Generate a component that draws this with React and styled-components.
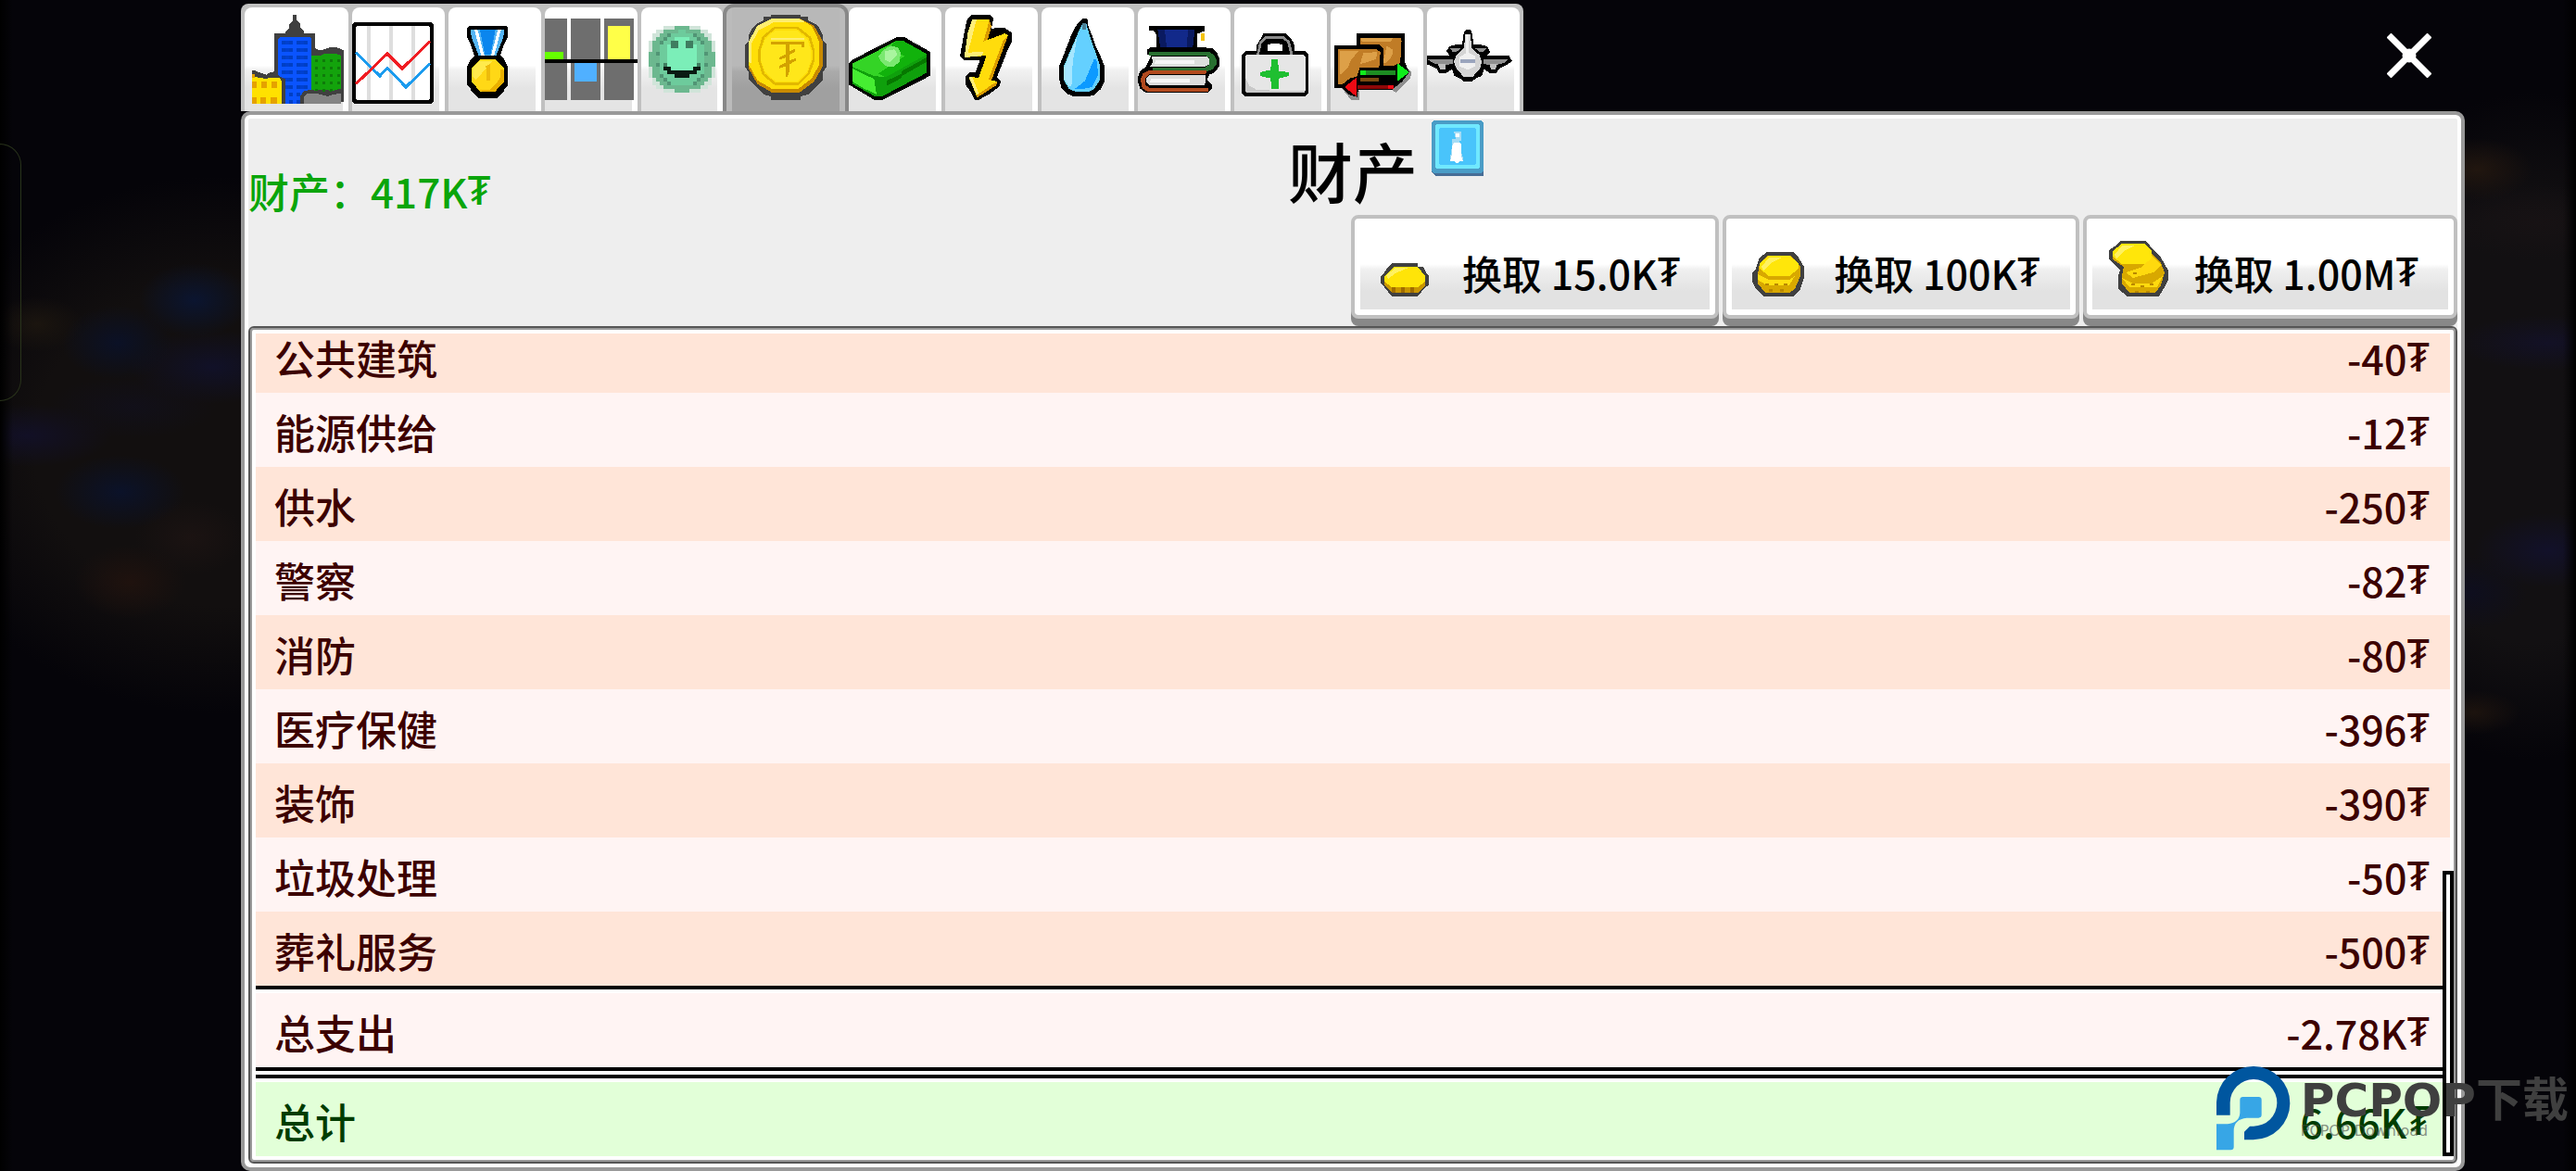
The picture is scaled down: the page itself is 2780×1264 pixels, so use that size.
import React from 'react';
import styled, { createGlobalStyle, css } from 'styled-components';

const GlobalStyle = createGlobalStyle`
  * {
    box-sizing: border-box;
  }

  body {
    margin: 0;
    background: #050409;
    font-family: 'Noto Sans CJK SC', 'Noto Sans', sans-serif;
    font-weight: 500;
  }
`;

const Screen = styled.div`
  position: relative;
  display: flex;
  flex-direction: column;
  height: 100vh;
  min-height: 700px;
  padding: 4px 120px 0 260px;
  overflow: hidden;
  background:
    linear-gradient(90deg, #000, transparent 14px, transparent calc(100% - 14px), #000),
    radial-gradient(ellipse 60px 40px at 127px 370px, #0b1126, transparent),
    radial-gradient(ellipse 60px 40px at 210px 324px, #0b1530, transparent),
    radial-gradient(ellipse 70px 40px at 130px 531px, #0b1229, transparent),
    radial-gradient(ellipse 90px 34px at 143px 439px, #11102288, transparent),
    radial-gradient(ellipse 90px 40px at 230px 396px, #111128, transparent),
    radial-gradient(ellipse 90px 34px at 30px 470px, #121026, transparent),
    radial-gradient(ellipse 60px 40px at 140px 628px, #1f120e, transparent),
    radial-gradient(ellipse 60px 40px at 205px 580px, #1b1312, transparent),
    radial-gradient(ellipse 50px 30px at 40px 350px, #1b150f, transparent),
    radial-gradient(ellipse 60px 34px at calc(100% - 107px) 183px, #21160f, transparent),
    radial-gradient(ellipse 110px 40px at calc(100% - 40px) 240px, #171214, transparent),
    radial-gradient(ellipse 100px 30px at calc(100% - 30px) 370px, #131126, transparent),
    radial-gradient(ellipse 80px 40px at calc(100% - 30px) 594px, #12112a, transparent),
    radial-gradient(ellipse 60px 40px at calc(100% - 113px) 640px, #0e0e1e, transparent),
    radial-gradient(ellipse 50px 24px at calc(100% - 110px) 769px, #1c130e, transparent),
    radial-gradient(ellipse 340px 290px at 240px 480px, #120f0f 60%, transparent),
    radial-gradient(ellipse 240px 360px at calc(100% - 50px) 460px, #121012 65%, transparent),
    #050409;
`;

const EdgeHandle = styled.div`
  position: absolute;
  left: 0;
  top: 155px;
  width: 23px;
  height: 278px;
  border: 1px solid #29331b;
  border-left: 0;
  border-radius: 0 24px 24px 0;
`;

const TopBar = styled.header`
  display: flex;
  justify-content: space-between;
  align-items: flex-start;
`;

const TabBar = styled.nav`
  display: flex;
  gap: 4px;
  padding: 4px 4px 0;
  background: #c0c0c0;
  border-radius: 8px 8px 0 0;
`;

const Tab = styled.button`
  display: block;
  padding: 0;
  border: 0;
  border-radius: 8px 8px 0 0;
  cursor: pointer;
  background: #fff linear-gradient(#fff 56%, #f2f2f2 60%, #e4e4e4 78%) no-repeat left /
    calc(100% - 6px) 100%;

  ${({ $active }) =>
    $active &&
    css`
      box-shadow: 0 0 0 4px #888;
      background: #bbb linear-gradient(#b8b8b8 56%, #aaa 62%, #a0a0a0 78%) no-repeat center /
        calc(100% - 12px) 100%;
    `}

  svg {
    display: block;
    height: 112px;
  }
`;

const CloseButton = styled.button`
  margin: 32px 36px 0 0;
  padding: 0;
  border: 0;
  background: none;
  cursor: pointer;

  svg {
    display: block;
    width: 48px;
    height: 48px;
  }
`;

const Panel = styled.main`
  flex: 1;
  min-height: 0;
  display: flex;
  flex-direction: column;
  padding: 4px;
  border: 4px solid #999;
  border-radius: 10px;
  background: #eee;
  box-shadow: inset 0 0 0 4px #fff;
`;

const Heading = styled.div`
  display: grid;
  grid-template-columns: 1fr auto 1fr;
  height: 104px;
`;

const Wealth = styled.p`
  align-self: end;
  margin: 0;
  padding-bottom: 6px;
  color: #0aa50a;
  font-size: 44px;
  line-height: 48px;
`;

const Title = styled.h1`
  margin: 0;
  padding-top: 4px;
  font-size: 70px;
  font-weight: 500;
  line-height: 104px;
`;

const InfoButton = styled.button`
  justify-self: start;
  align-self: start;
  margin: 2px 0 0 15px;
  padding: 0;
  border: 0;
  background: none;
  cursor: pointer;

  svg {
    display: block;
    width: 56px;
    height: 60px;
  }
`;

const Offers = styled.div`
  display: flex;
  justify-content: flex-end;
  gap: 4px;
  height: 120px;
`;

const OfferButton = styled.button`
  display: flex;
  align-items: flex-end;
  gap: 28px;
  height: 112px;
  padding: 24px 38px 20px 24px;
  border: 4px solid #c0c0c0;
  border-radius: 8px;
  box-shadow: 0 8px 0 #888;
  background: #fff linear-gradient(#fff 50%, #f0f0f0 56%, #e2e2e2 80%) no-repeat 6px 0 /
    calc(100% - 12px) calc(100% - 6px);
  color: #000;
  font: inherit;
  font-size: 43px;
  line-height: 52px;
  white-space: nowrap;
  cursor: pointer;

  svg {
    width: 64px;
    height: 60px;
  }
`;

const Currency = styled.span`
  font-family: 'Noto Sans', sans-serif;
  line-height: 1;
  vertical-align: 4px;
`;

const Ledger = styled.section`
  position: relative;
  flex: 1;
  min-height: 0;
  padding: 6px;
  border: 2px solid #555;
  border-radius: 6px;
  background: #fff;
  box-shadow: inset 0 0 0 2px #999;
`;

// Scrolled to the end: the overflow is cut off above the first row.
const Viewport = styled.div`
  display: flex;
  flex-direction: column;
  justify-content: flex-end;
  height: 100%;
  overflow: hidden;
`;

const Table = styled.table`
  flex-shrink: 0;
  width: 100%;
  border-spacing: 0;
  font-size: 43px;
  line-height: 48px;
`;

const Row = styled.tr`
  color: #3c0000;

  th,
  td {
    height: 80px;
    padding: 4px 22px 0 20px;
    font-weight: 500;
    text-align: left;
    background: ${({ $odd }) => ($odd ? '#ffe5d8' : '#fff4f3')};
  }

  th {
    font-size: 44px;
  }

  td {
    text-align: right;
  }
`;

const SumRow = styled(Row)`
  th,
  td {
    height: 88px;
    padding-top: 8px;
    border-top: 4px solid #000;
    background: linear-gradient(#fff 4px, #fff4f3 4px) padding-box;
  }
`;

const TotalRow = styled(Row)`
  color: #003c00;

  th,
  td {
    height: 96px;
    padding-top: 8px;
    border-top: 12px double #000;
    background: linear-gradient(#fff 4px, #e2ffd8 4px) padding-box;
  }
`;

const ScrollThumb = styled.div`
  position: absolute;
  right: 2px;
  bottom: 6px;
  width: 12px;
  height: 308px;
  border: 4px solid #000;
  background: #fff;
`;

const Watermark = styled.div`
  position: absolute;
  right: 8px;
  bottom: 22px;
  display: flex;
  align-items: center;
  gap: 11px;
  color: #3f3f3f;

  svg {
    width: 80px;
    height: 92px;
  }
`;

const WatermarkName = styled.div`
  font-family: 'DejaVu Sans', 'Noto Sans CJK SC', sans-serif;
  font-size: 50px;
  font-weight: 700;
  line-height: 50px;
  white-space: nowrap;
`;

const WatermarkNote = styled.div`
  font-family: 'DejaVu Sans', sans-serif;
  font-size: 16px;
  font-weight: 400;
  line-height: 16px;
  color: rgba(70, 70, 70, 0.6);
`;

const Icon = ({ width, view, children }) => (
  <svg
    width={width}
    viewBox={view}
    preserveAspectRatio="none"
    shapeRendering="crispEdges"
    aria-hidden="true"
  >
    {children}
  </svg>
);

const range = (from, to, step) => {
  const out = [];
  for (let n = from; n < to; n += step) out.push(n);
  return out;
};

const Dots = ({ xs, ys, size = 12, fill }) =>
  ys.map((y) =>
    xs.map((x) => <rect key={`${x}-${y}`} x={x} y={y} width={size} height={size} fill={fill} />)
  );

const CityIcon = () => (
  <Icon width={112} view="42 24 336 336">
    <path
      fill="#404040"
      d="M138 108h36v-6l12-12v-12l12-12V48h12v18l12 12v12l12 12v6h36v48l12 6h12l24-8h24l22 10v166H138V240z"
    />
    <path fill="#0a54ff" d="M150 126l6-6h96l6 6v210H150z" />
    <Dots xs={[162, 186, 210, 234]} ys={range(132, 336, 24)} fill="#003fc4" />
    <Dots xs={[174, 222]} ys={range(132, 290, 24)} fill="#0040d0" />
    <path fill="#13a30c" d="M258 180h30l12-6h36l18 6v112l-18 6-24-6h-30l-24 2z" />
    <Dots xs={[270, 294, 318, 342]} ys={range(192, 290, 24)} size={9} fill="#0e7a0a" />
    <path fill="#404040" d="M66 228h10l12 6 24 8 14-8 14-2 20 18 14 6v80H66z" />
    <path fill="#ffe100" d="M66 240l14 10 24 4 50-2 8 10v74H66z" />
    <path fill="#e5a200" d="M66 240h10v12H66zM66 264h14v22H66zM96 264h18v22H96zM128 264h20v22h-20zM66 314h14v22H66zM94 314h18v22H94zM126 314h20v22h-20z" />
    <path fill="#404040" d="M222 312l10-16 22-6 30 6 30 4 20-8 20-4v48H222z" />
    <path fill="#848484" d="M234 336v-22l12-12h24l20 4 20 6 20-6 24-4v34z" />
  </Icon>
);

const ChartIcon = () => (
  <Icon width={100} view="390 24 300 336">
    <rect x="390" y="72" width="264" height="264" rx="12" />
    <rect x="402" y="84" width="240" height="240" rx="8" fill="#fff" />
    <path fill="#dedede" d="M439 84h10v240h-10zM511 84h10v240h-10zM583 84h10v240h-10z" />
    <g fill="none" strokeWidth="9">
      <path stroke="#1b9bee" d="M402 170l78 76 24-26 60 62 78-76" />
      <path stroke="#f01c22" d="M402 272l102-98 48 48 90-88" />
    </g>
  </Icon>
);

const MedalIcon = () => (
  <Icon width={100} view="702 24 300 336">
    <path d="M762 90l6-6h120l6 6v30l-12 24-12 36 12 12 12 24v60l-12 12v6l-24 24h-60l-24-24v-6l-12-12v-60l12-24 12-12-12-36-12-24z" />
    <path fill="#55b5f5" d="M774 96h108l-2 24-24 60h-56l-24-60z" />
    <path fill="#0b86ee" d="M804 96h50l-16 80h-18z" />
    <path fill="#fff" d="M786 96h10l22 84h-10zM862 96h10l-22 84h-10z" />
    <path fill="#ffd816" d="M804 192h48l30 30v42l-30 34h-46l-30-34v-42z" />
    <path fill="#ffea4c" d="M804 198h40l-52 60-12-10v-28z" />
    <path fill="#eab000" d="M872 222l10 6v36l-30 34h-40l-10-8h36l30-34z" />
    <path fill="#edbb0c" d="M820 216l16-8v54h-10v-40z" />
  </Icon>
);

const BarsIcon = () => (
  <Icon width={100} view="1014 24 300 336">
    <path fill="#6e6e6e" d="M1014 60h72v264h-72zM1098 60h96v264h-96zM1206 60h96v264h-96z" />
    <rect x="1014" y="168" width="60" height="24" fill="#66ff00" />
    <rect x="1110" y="204" width="72" height="60" fill="#50b0ff" />
    <rect x="1218" y="84" width="72" height="108" fill="#ffff48" />
    <rect x="1014" y="192" width="300" height="12" />
  </Icon>
);

const SMILEY_COLORS = {
  l: '#d0e4d9',
  a: '#6cb88f',
  m: '#6dcb9c',
  b: '#7beeb8',
  e: '#3f7d60',
  d: '#519575',
  k: '#0a1a12',
};
const SMILEY = [
  '....lllaaaalll....',
  '..llaaaammaaaall..',
  '.llaadmmmmmmdaall.',
  '.laadmmbbbbmmdaal.',
  'laadmmeebbeemmdaal',
  'laammbeebbeebmmaal',
  'laammbbbbbbbbmmaal',
  'aadmmbbbbbbbbmmdaa',
  'aaammbbbbbbbbmmaaa',
  'aaammbbbbbbbbmmaaa',
  'aadmebbbbbbbbemdaa',
  'laamkkbbbbbbkkmaal',
  'laammkkkkkkkkmmaal',
  'laadmmmkkkkmmmdaal',
  '.laadmmmmmmmmdaal.',
  '.llaadmmmmmmdaall.',
  '..llaaaaaaaaaall..',
  '....lllaaaalll....',
];

const SmileyIcon = () => (
  <Icon width={88} view="6 24 264 336">
    {SMILEY.map((line, y) =>
      [...line].map(
        (c, x) =>
          c !== '.' && (
            <rect
              key={`${x}-${y}`}
              x={30 + x * 12}
              y={84 + y * 12}
              width="12"
              height="12"
              fill={SMILEY_COLORS[c]}
            />
          )
      )
    )}
  </Icon>
);

const CoinIcon = () => (
  <Icon width={128} view="282 24 384 336">
    <path fill="#404040" d="M426 48h96v6h24v12l24 12 12 12 12 24v18l12 12v72l-12 18v24l-24 24-24 24-24 6v12h-96v-12l-24-6-24-24-24-24v-24l-12-18v-72l12-12v-18l12-24 12-12 24-12v-12h24z" />
    <path fill="#c98a00" d="M430 60h88l48 24 28 50v80l-28 50-48 36h-88l-48-28-28-50v-84l28-50z" />
    <path fill="#ffdf08" d="M430 60h88l40 24 24 50v76l-24 44-44 34h-84l-48-28-28-50v-76l28-50z" />
    <path fill="#ffee70" d="M430 60h88l20 12H436l-50 26-22 42v66l-10-6v-66l28-50z" />
    <path fill="none" stroke="#e2b800" strokeWidth="8" d="M438 90h74l40 32 12 42v30l-16 44-34 34h-74l-38-32-14-44v-32l14-44z" />
    <path fill="#ffe71a" d="M440 98h70l34 30 12 38v28l-14 40-32 30h-68l-34-30-14-38v-32l14-38z" />
    <path fill="#d3a200" d="M426 134h108v18h-10v-8h-98zM474 144h12v22l18-8v10l-18 10v18l22-8v8l-22 12v20l-6 20h-6v-34l-22 8v-8l22-12v-16l-22 8v-8l22-10z" />
    <path fill="#ffee70" d="M426 122h108v8H426z" />
  </Icon>
);

const CashIcon = () => (
  <Icon width={100} view="678 24 300 336">
    <path d="M678 204l12-10 24-12 24-14 96-48h24l24 14 60 34v76l-24 14-132 66h-24l-84-50z" />
    <path fill="#0fa00c" d="M690 212l140-80h24l76 42v62l-144 76h-24l-72-40z" />
    <path fill="#34d426" d="M690 206l144-74h18l78 44-132 74-38-4-70-30z" />
    <path fill="#11b20c" d="M834 132l18 0 78 44-132 74-24-12 84-56-52-30z" />
    <path fill="#46ee32" d="M690 222l70 34 8 50-42-20-36-22z" />
    <path fill="#067800" d="M850 230l80-44v14l-80 46zM800 262l50-24v14l-50 26z" />
    <path fill="#7ae870" d="M792 160l22-12 24 6 8 18-4 28-18 16h-22l-18-14-10-20z" />
    <path fill="#a9f59f" d="M796 166l30-6 10 18-24 24-18-8z" />
  </Icon>
);

const BoltIcon = () => (
  <Icon width={100} view="990 24 300 336">
    <path d="M1074 48h60l12 12-6 32 42-2 24 16v30l-12 22-36 92 12 12-4 18-32 24-36 20h-12l-12-24-18-26v-28l12-12h20l14-38h-50l-14-14 10-56 8-42 6-24z" />
    <path fill="#ffdc0c" d="M1078 62h54l-4 24-14 48 70-26 10 6-54 146 20 4-4 12-62 40-28-68 32 4 26-72-72 6 12-68z" />
    <path fill="#ffee78" d="M1078 62h14l-28 108 50-2-6 12-56 6 12-84zM1066 248l12 2 22 54-6 8z" />
    <path fill="#d99a00" d="M1132 62l-4 24-14 48 14-6 12-42zM1194 114l-54 146-10-2 48-126zM1160 264l-4 12-62 40-2-8 50-34z" />
  </Icon>
);

const DropIcon = () => (
  <Icon width={100} view="12 24 290 336">
    <path d="M134 66l6-6h12l6 6v18l12 30 12 36 14 30 14 36v48l-12 24-22 20-18 4h-46l-20-8-18-20-6-24v-48l12-30 24-66 16-32z" />
    <path fill="#64d0ff" d="M140 76h12l12 44 32 94v44l-20 30-18 10h-36l-24-10-16-28v-46l12-30 36-86z" />
    <path fill="#a6e6ff" d="M82 220l12-30 30-72-14 80-4 80-8 2-16-24z" />
    <path fill="#0c9aff" d="M176 192h8l6 50-20 40-30 6h-24l32-26 16-40z" />
    <path fill="#4c7f92" d="M140 74h12v22h-12z" />
  </Icon>
);

const BooksIcon = () => (
  <Icon width={100} view="314 24 290 336">
    <path d="M348 84h175v16l-24 10v42l48 4 14 14 8 20v24l-14 20-18 8-6 16 14 14v16l-12 12H338l-18-14-6-22v-14l8-22 16-10 6-14 12-22-12-6v-16l12-8h16v-38l-8-14h-16z" />
    <path fill="#12298a" d="M376 97h116l-6 56H384z" />
    <path fill="#0a1a60" d="M376 97h22l6 56h-20zM470 97h22l-6 56h-18z" />
    <path fill="#f4c20c" d="M510 108h13v23h-12z" />
    <path fill="#287030" d="M348 168h190l16 12 6 14v14l-12 16-14 6H360v-10h160l18-10v-22l-12-8H348z" />
    <path fill="#dcdfdc" d="M358 182h172l8 8v18l-14 8H352l8-14z" />
    <path fill="#f6f6f6" d="M370 194h120v12H366z" />
    <path fill="#b24a1e" d="M350 228h180l-4 12H350l-12 12v22l12 12h184v12H346l-18-12-4-20v-14l6-14z" />
    <path fill="#dcdcdc" d="M352 242h174l-2 34H350l-10-10v-14z" />
    <path fill="#f6f6f6" d="M356 254h120v12H352z" />
  </Icon>
);

const KitIcon = () => (
  <Icon width={100} view="616 24 290 336">
    <path
      fillRule="evenodd"
      d="M708 108h68l12 10 14 20 4 26h30l12 12v126l-10 10H650l-11-10V178l12-12h34v-18l12-20zM720 146v20h48v-20l-10-4h-28z"
    />
    <path fill="none" stroke="#8b8b8b" strokeWidth="8" d="M690 178l8-40 16-16h56l16 14 10 42" />
    <rect x="720" y="146" width="48" height="20" fill="#fff" />
    <path fill="#e6e6e6" d="M650 182l4-4h180l4 4v112l-4 6H656l-6-6z" />
    <path fill="#c9c9c9" d="M650 250l14 28 24 14 150 2-4 6H656l-6-6z" />
    <path fill="#1fbf31" d="M732 192h20l4 38 32 4v12l-32 8-2 34h-22l-2-34-32-8v-12l32-8z" />
  </Icon>
);

const TradeIcon = () => (
  <Icon width={100} view="918 24 290 336">
    <path fill="#8f8f8f" d="M1134 196l38 38-6 22-44 44-16-12zM952 284l30 40h26v-30z" />
    <path d="M998 108h152v92l14 34-22 30-34 28h-104l-2 22-24-6-24-22h-24V146h70z" />
    <path fill="#c07c26" d="M1010 122h126l4 10-4 72-20 8h-34v-56l-12-12h-58z" />
    <path fill="#dda048" d="M1012 122h100l-6 14h-90zM1094 148l20 14-4 20-20 24-8-4z" />
    <path fill="#c07c26" d="M942 160h120l12 8-4 50h-60l-10 30-22 6-24 20h-12z" />
    <path fill="#dda048" d="M946 164h60l-24 30-10 24-26 26zM1020 172l44-4-4 24-50 16z" />
    <path fill="#7b4a10" d="M1012 252h56v12h-56z" />
    <path fill="#1d8d22" d="M1012 228h108v14h-108z" />
    <path fill="#10ee1c" d="M1010 228h18v14h-18zM1126 204l38 30-38 30z" />
    <path fill="#8d0808" d="M1002 275h112v14h-112z" />
    <path fill="#ee0a14" d="M1098 275h18v14h-18zM1000 250l-38 32 38 32z" />
  </Icon>
);

const PlaneIcon = () => (
  <Icon width={100} view="1220 24 290 336">
    <path d="M1336 102L1342 96H1354L1360 102 1366 144 1384 144 1408 150 1418 168 1406 180H1476L1487 198 1470 210 1446 222 1436 238H1418L1398 224 1392 246 1372 254 1362 264H1336L1324 254 1306 246 1298 224 1278 238H1258L1250 222 1220 208V180H1292L1280 166 1290 150 1312 144H1330z" />
    <path fill="#8f8f8f" d="M1222 192H1300V208L1262 210 1238 204zM1474 192H1396V208L1436 210 1462 204zM1292 156H1326L1312 168H1300zM1406 156H1370L1384 168H1396z" />
    <path fill="#bdbdbd" d="M1254 208H1278V224H1262zM1416 208H1440L1434 224H1420z" />
    <path fill="#d4d4d4" d="M1340 110H1356L1360 156 1384 178 1392 200 1386 222 1362 250H1336L1312 222 1304 200 1312 178 1336 156z" />
    <path fill="#f0f0f0" d="M1342 112H1350L1352 172 1372 182V214L1350 226 1322 216 1320 186 1342 172z" />
    <path fill="#9ba5bd" d="M1324 192h46v12h-46z" />
  </Icon>
);

const InfoIcon = () => (
  <svg viewBox="0 0 56 60" shapeRendering="crispEdges" aria-hidden="true">
    <path fill="#476d96" d="M0 20h56v40H4l-4-4z" />
    <rect width="56" height="57" rx="4" fill="#4a9cc6" />
    <rect x="4" y="4" width="48" height="48" rx="3" fill="#70e8ff" />
    <rect x="8" y="8" width="40" height="40" rx="3" fill="#49c4fb" />
    <path fill="#a5dcf5" d="M24 12h8v10h-2v6l4 12v4H20v-4l2-12v-8h4z" />
    <path fill="#fff" d="M26 14h4v4h-4zM24 24h6l2 2v12l2 6h-4l-2 2h-2l-2-2h-4l2-8v-8z" />
  </svg>
);

const SingleCoin = () => (
  <svg viewBox="0 0 64 60" shapeRendering="crispEdges" aria-hidden="true">
    <path fill="#404040" d="M16 24h28v4h6l4 8 2 2v10l-4 2-8 10H16l-8-10-4-4V38l4-4 4-6z" />
    <path fill="#c99600" d="M8 40h44v8l-8 8H16l-8-8z" />
    <path fill="#a06c00" d="M16 50h4v6h-4zM26 50h4v6h-4zM36 50h4v6h-4z" />
    <g transform="translate(0 2)">
      <path fill="#ffe408" d="M18 26h26l8 10v6l-8 6H16l-8-6v-6z" />
      <path fill="#fff160" d="M20 27h14l-14 6-8 6-2-4z" />
    </g>
  </svg>
);

const CoinStack = () => (
  <svg viewBox="0 0 64 60" shapeRendering="crispEdges" aria-hidden="true">
    <path fill="#404040" d="M20 12h28l6 6 6 10v12l-4 12-8 8H16l-8-8-4-8V34l4-4 4-12z" />
    <path fill="#d8a800" d="M20 16h26l10 12v10l-6 14-6 4H18l-8-10V36l2-12z" />
    <path fill="#ffdf10" d="M10 36l12 6h22l6-4-6 10H20l-10-6z" />
    <path fill="#b98800" d="M18 46h4v2h-4zM28 46h4v2h-4zM38 46h4v2h-4zM22 52h4v3h-4zM34 52h4v3h-4z" />
    <path fill="#ffe60a" d="M22 16h22l10 8v6l-10 8H22l-10-8v-6z" />
    <path fill="#fff160" d="M22 18h14l-12 6-8 8-2-4z" />
  </svg>
);

const CoinPile = () => (
  <svg viewBox="0 0 64 60" shapeRendering="crispEdges" aria-hidden="true">
    <path fill="#404040" d="M12 0h28l8 10 8 8 8 14v10l-4 8-6 10H20l-10-8V38l2-6-6-6-6-6V10l6-4z" />
    <path fill="#d8a800" d="M14 4h24l8 10 10 10 4 10-4 14-6 8H22l-8-10v-8l2-10L4 20V12z" />
    <path fill="#ffd90e" d="M46 16l10 10-8 8-22 6-8-6 18-6zM14 40l12 6h20l12-8-6 12H22z" />
    <path fill="#b98800" d="M24 46h4v2h-4zM34 48h4v2h-4zM44 46h4v2h-4zM28 54h4v2h-4zM40 54h4v2h-4zM26 34h4v2h-4z" />
    <path fill="#ffe60a" d="M14 3h24l8 8v8l-8 6H14l-10-8v-6z" />
    <path fill="#fff160" d="M14 5h14l-12 6-8 8-2-4z" />
  </svg>
);

const CloseIcon = () => (
  <svg viewBox="0 0 48 48" stroke="#fff" strokeWidth="7" aria-hidden="true">
    <path d="M2 2l44 44M46 2L2 46" />
    <circle cx="24" cy="24" r="4" fill="#fff" />
  </svg>
);

const WatermarkLogo = () => (
  <svg viewBox="94 685 240 274" aria-hidden="true">
    <path
      fill="#00569f"
      d="M94 845v-42a119 119 0 1 1 119 122h-29v-26l18-18h11a76 76 0 1 0-75-76v40z"
    />
    <path
      fill="#37a6e6"
      d="M180 786h50q10 0 10 10v48q0 10-10 10h-38q-42 4-42 42v52q0 10-10 10H94v-84h36q38-4 40-36v-42q0-10 10-10z"
    />
  </svg>
);

const tabs = [
  { label: '城市', icon: CityIcon },
  { label: '统计', icon: ChartIcon },
  { label: '成就', icon: MedalIcon },
  { label: '需求', icon: BarsIcon },
  { label: '幸福', icon: SmileyIcon },
  { label: '财产', icon: CoinIcon, active: true },
  { label: '收支', icon: CashIcon },
  { label: '能源', icon: BoltIcon },
  { label: '供水', icon: DropIcon },
  { label: '教育', icon: BooksIcon },
  { label: '医疗', icon: KitIcon },
  { label: '贸易', icon: TradeIcon },
  { label: '机场', icon: PlaneIcon },
];

const offers = [
  { amount: '15.0K', icon: SingleCoin },
  { amount: '100K', icon: CoinStack },
  { amount: '1.00M', icon: CoinPile },
];

const expenses = [
  { name: '公共建筑', amount: '-40' },
  { name: '能源供给', amount: '-12' },
  { name: '供水', amount: '-250' },
  { name: '警察', amount: '-82' },
  { name: '消防', amount: '-80' },
  { name: '医疗保健', amount: '-396' },
  { name: '装饰', amount: '-390' },
  { name: '垃圾处理', amount: '-50' },
  { name: '葬礼服务', amount: '-500' },
];

const Money = ({ children }) => (
  <>
    {children}
    <Currency>₮</Currency>
  </>
);

const App = () => {
  return (
    <Screen>
      <GlobalStyle />
      <EdgeHandle />
      <TopBar>
        <TabBar>
          {tabs.map(({ label, icon: TabIcon, active }) => (
            <Tab key={label} type="button" aria-label={label} $active={active}>
              <TabIcon />
            </Tab>
          ))}
        </TabBar>
        <CloseButton type="button" aria-label="关闭">
          <CloseIcon />
        </CloseButton>
      </TopBar>
      <Panel>
        <Heading>
          <Wealth>
            财产：<Money>417K</Money>
          </Wealth>
          <Title>财产</Title>
          <InfoButton type="button" aria-label="信息">
            <InfoIcon />
          </InfoButton>
        </Heading>
        <Offers>
          {offers.map(({ amount, icon: OfferIcon }) => (
            <OfferButton key={amount} type="button">
              <OfferIcon />
              <span>
                换取 <Money>{amount}</Money>
              </span>
            </OfferButton>
          ))}
        </Offers>
        <Ledger>
          <Viewport>
            <Table>
              <tbody>
                {expenses.map(({ name, amount }, i) => (
                  <Row key={name} $odd={i % 2 === 0}>
                    <th scope="row">{name}</th>
                    <td>
                      <Money>{amount}</Money>
                    </td>
                  </Row>
                ))}
                <SumRow>
                  <th scope="row">总支出</th>
                  <td>
                    <Money>-2.78K</Money>
                  </td>
                </SumRow>
                <TotalRow>
                  <th scope="row">总计</th>
                  <td>
                    <Money>6.66K</Money>
                  </td>
                </TotalRow>
              </tbody>
            </Table>
          </Viewport>
          <ScrollThumb />
        </Ledger>
      </Panel>
      <Watermark>
        <WatermarkLogo />
        <div>
          <WatermarkName>PCPOP下载</WatermarkName>
          <WatermarkNote>PCPOP Download</WatermarkNote>
        </div>
      </Watermark>
    </Screen>
  );
};

export default App;
